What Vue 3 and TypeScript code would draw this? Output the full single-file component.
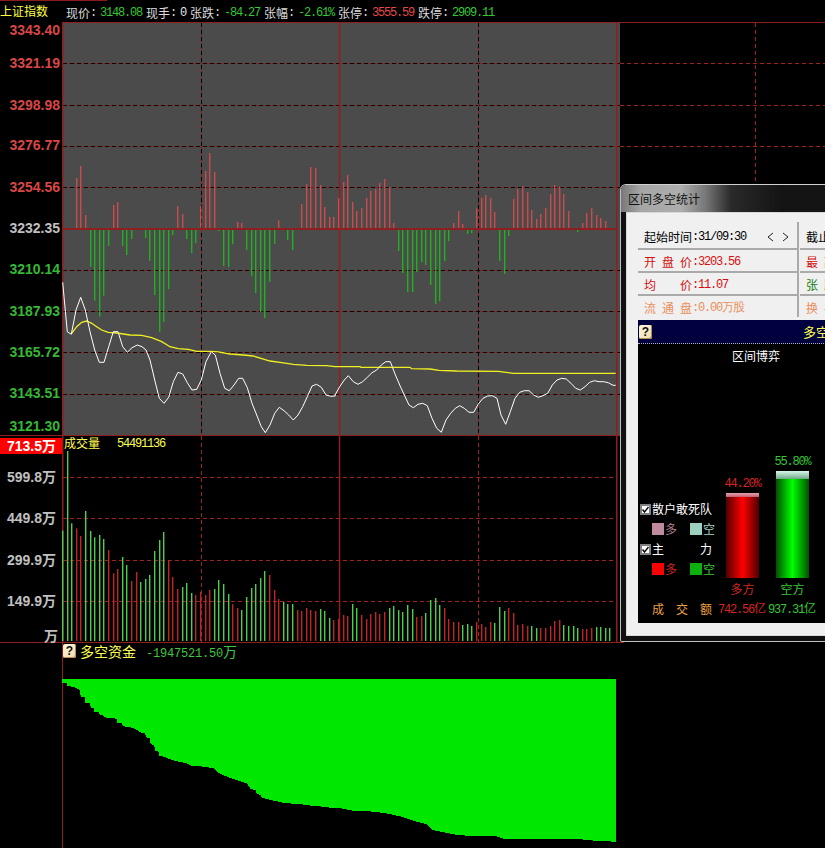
<script setup lang="ts">
type Pt = [number, number]

const barX = (i: number) => Math.round(62 + 4.6 * i)
const toPts = (raw: Pt[], x0: number, y0: number): Pt[] => raw.map(([x, y]) => [x0 + x / 3, y0 + y / 3])
const str = (p: Pt[]) => p.map(([x, y]) => `${x.toFixed(1)},${y.toFixed(1)}`).join(' ')

const macdRaw = [235,235,239,84,48,195,350,452,500,437,288,165,156,288,315,267,235,235,264,333,435,546,516,417,255,168,192,267,309,279,168,63,9,66,243,348,351,282,216,219,300,378,429,486,504,396,282,211,238,270,300,235,162,102,51,54,105,171,201,201,144,96,75,156,183,174,144,123,117,99,87,111,219,303,369,426,426,366,336,345,405,462,453,333,273,219,183,222,252,249,175,144,135,144,186,333,372,258,147,117,108,126,180,207,192,174,132,105,111,132,183,235,246,219,189,174,195,204,213,235]
const macd = macdRaw
  .map((z, i) => ({ x: barX(i), y: 150 + z / 3, up: z < 235 }))
  .filter((b) => Math.abs(b.y - 228.33) > 0.1)
  .map((b) => ({ x: b.x, y: b.up ? b.y : 229, h: Math.abs(b.y - 229), color: b.up ? '#c84c4c' : '#22b022' }))

const volRaw = '332g 93g 310g 325r 348r 273g 333g 352g 345g 357g 390r 460r 447r 411g 435g 483r 456r 486g 477g 465g 393g 360g 336g 420r 471r 507r 501g 489g 519g 525r 516r 525r 510r 507g 480g 492g 522g 552r 564r 570g 531g 504g 492g 474g 453g 465r 510r 537r 546g 552g 552g 570r 573r 564r 570r 573r 567g 573g 594g 600r 597r 585r 588r 552g 564g 585r 597r 582r 576r 582r 576r 564g 558g 570g 576g 555g 567g 591r 588r 579g 540g 534g 555g 564r 597r 606r 606r 615g 612g 618g 606r 612r 621r 606r 609g 561g 573g 564r 579r 615r 612r 618r 618g 624g 624r 624r 618r 603r 600r 615g 618g 618g 624g 627r 627r 624r 621g 621g 624g 624g'
const volumes = volRaw.split(' ').map((s, i) => {
  const y = 420 + parseInt(s) / 3
  return { x: barX(i), y, h: 641 - y, color: s.endsWith('g') ? '#4cd04c' : '#c02424' }
})

const whiteA: Pt[] = [[38,397],[42,440],[52,545],[64,553],[78,480],[92,442],[106,480],[120,545],[134,600],[148,637],[162,637],[176,590],[190,545],[204,545],[218,590],[232,607],[246,593],[262,585],[276,590],[288,600],[300,630],[314,690],[328,745],[342,760],[356,742],[370,695],[384,667],[398,672],[412,698],[426,720],[440,718],[454,690],[468,635],[484,605],[496,615],[510,670],[524,715],[538,722],[552,705],[566,685],[578,685],[592,713],[606,760],[620,795],[634,830],[646,848],[660,825],[674,790],[688,772],[702,782],[716,795],[730,810],[744,795],[758,770],[772,740],[786,708],[800,703],[814,712],[828,735],[842,739],[856,738]]
const whiteB: Pt[] = [[0,735],[14,710],[28,690],[40,677],[55,695],[69,703],[83,695],[97,682],[111,668],[125,660],[139,645],[152,635],[166,635],[180,672],[194,705],[208,735],[222,765],[235,773],[249,763],[263,760],[277,767],[291,805],[305,835],[319,847],[333,810],[347,790],[361,775],[374,767],[388,775],[402,787],[416,787],[430,762],[444,745],[458,738],[472,737],[486,745],[498,795],[512,823],[526,785],[540,745],[554,727],[568,722],[582,722],[596,735],[610,742],[624,737],[638,730],[652,705],[666,690],[680,685],[694,687],[708,700],[722,715],[736,720],[750,710],[764,697],[778,692],[792,695],[806,695],[820,698],[834,706],[842,706]]
const whiteLine = str([...toPts(whiteA, 50, 150), ...toPts(whiteB, 335, 150)])

const yellowA: Pt[] = [[65,550],[80,530],[95,517],[110,513],[125,520],[140,530],[155,540],[175,547],[200,549],[240,555],[275,556],[305,563],[335,575],[360,590],[385,596],[415,598],[440,604],[470,604],[500,605],[540,612],[580,615],[610,618],[660,633],[695,638],[730,643],[770,646],[830,647]]
const yellowB: Pt[] = [[0,650],[75,650],[78,652],[225,652],[230,656],[285,657],[312,661],[365,663],[490,664],[535,670],[842,670]]
const yellowLine = str([...toPts(yellowA, 50, 150), ...toPts(yellowB, 335, 150)])

const areaA: Pt[] = [[37,130],[50,130],[52,137],[78,143],[90,150],[92,170],[105,172],[105,188],[120,190],[122,203],[133,205],[133,215],[147,217],[149,224],[160,226],[162,232],[200,236],[202,248],[216,250],[218,258],[245,263],[258,268],[270,277],[285,280],[288,292],[300,295],[302,312],[313,315],[315,332],[328,335],[328,347],[342,350],[356,356],[385,365],[410,370],[425,377],[450,379],[490,384],[506,398],[520,405],[535,412],[560,420],[590,430],[602,447],[617,450],[620,462],[632,465],[635,472],[648,476],[672,482],[700,488],[730,491],[755,493],[785,497],[810,499],[840,503],[870,504]]
const areaB: Pt[] = [[0,384],[40,392],[80,393],[135,399],[180,409],[230,425],[260,433],[275,449],[340,463],[380,467],[465,468],[497,478],[520,477],[715,477],[775,483],[828,485]]
const area = str([[62, 679], [616, 679], ...toPts(areaB, 340, 680).reverse(), ...toPts(areaA, 50, 640).reverse()])

const priceLabels = [
  { t: '3343.40', y: 30, c: 'up' }, { t: '3321.19', y: 63, c: 'up' }, { t: '3298.98', y: 105, c: 'up' },
  { t: '3276.77', y: 145, c: 'up' }, { t: '3254.56', y: 187, c: 'up' }, { t: '3232.35', y: 228, c: 'flat' },
  { t: '3210.14', y: 269, c: 'down' }, { t: '3187.93', y: 311, c: 'down' }, { t: '3165.72', y: 352, c: 'down' },
  { t: '3143.51', y: 393, c: 'down' }, { t: '3121.30', y: 426, c: 'down' },
]
const priceGrid = [63, 105, 146, 187, 270, 311, 352, 394]
const volGrid = [477, 518, 560, 601]
const volLabels = [
  { t: '599.8万', y: 477 }, { t: '449.8万', y: 518 }, { t: '299.9万', y: 560 }, { t: '149.9万', y: 601 },
]

const quotes = [
  { l: '现价', v: '3148.08', c: 'down' }, { l: '现手', v: '0', c: 'plain' }, { l: '张跌', v: '-84.27', c: 'down' },
  { l: '张幅', v: '-2.61%', c: 'down' }, { l: '张停', v: '3555.59', c: 'up' }, { l: '跌停', v: '2909.11', c: 'down' },
]
const leftRows = [
  { l: '开 盘 价', v: ':3203.56', c: 'red' }, { l: '均 价', v: ':11.07', c: 'red' }, { l: '流 通 盘', v: ':0.00万股', c: 'orange' },
]
const rightRows = [
  { l: '截止时间', c: 'black' }, { l: '最 高 价', c: 'red' }, { l: '张 跌 幅', c: 'green' }, { l: '换 手 率', c: 'orange' },
]
</script>

<template>
  <div class="screen">
    <header class="quote-bar">
      <span class="index-name">上证指数</span>
      <div class="quotes">
        <span v-for="q in quotes" :key="q.l" class="quote">
          <span class="quote-label">{{ q.l }}<i class="num">:</i></span>
          <span class="num" :class="q.c">{{ q.v }}</span>
        </span>
      </div>
    </header>

    <svg class="pane" width="825" height="414" viewBox="0 22 825 414">
      <rect x="62" y="23" width="558" height="412" fill="#4b4b4b" />
      <g class="crisp">
        <line x1="62" y1="22.5" x2="825" y2="22.5" class="solid" />
        <line x1="0" y1="435.5" x2="620" y2="435.5" class="solid" />
        <template v-for="y in priceGrid" :key="y">
          <line x1="63" :y1="y + 0.5" x2="620" :y2="y + 0.5" class="solid" />
          <line x1="63" :y1="y + 0.5" x2="620" :y2="y + 0.5" class="dash-black" />
          <line x1="620" :y1="y + 0.5" x2="825" :y2="y + 0.5" class="dash-red" />
        </template>
        <template v-for="x in [201.5, 478.5]" :key="x">
          <line :x1="x" y1="23" :x2="x" y2="435" class="solid" />
          <line :x1="x" y1="23" :x2="x" y2="435" class="dash-black" />
        </template>
        <line x1="755.5" y1="23" x2="755.5" y2="181" class="dash-red" />
      </g>
      <rect x="62" y="22" width="1.5" height="414" fill="#8f1e1e" />
      <rect x="338.8" y="22" width="1.5" height="414" fill="#8f1e1e" />
      <rect x="616" y="22" width="1.5" height="414" fill="#8f1e1e" />
      <rect v-for="(b, i) in macd" :key="i" :x="b.x" :y="b.y" width="1.4" :height="b.h" :fill="b.color" />
      <rect x="62" y="228" width="555" height="2" fill="#8f1e1e" class="crisp" />
      <polyline :points="yellowLine" class="yellow-line" />
      <polyline :points="whiteLine" class="white-line" />
      <text v-for="p in priceLabels" :key="p.t" x="60" :y="p.y + 5" class="axis" :class="p.c">{{ p.t }}</text>
    </svg>

    <svg class="pane" width="825" height="207" viewBox="0 436 825 207">
      <g class="crisp">
        <template v-for="y in volGrid" :key="y">
          <line x1="63" :y1="y + 0.5" x2="617" :y2="y + 0.5" class="dash-red" />
        </template>
        <line x1="201.5" y1="436" x2="201.5" y2="642" class="dash-red" />
        <line x1="478.5" y1="436" x2="478.5" y2="642" class="dash-red" />
      </g>
      <rect x="62" y="436" width="1.5" height="206" fill="#8f1e1e" />
      <rect x="338.8" y="436" width="1.5" height="206" fill="#8f1e1e" />
      <rect x="616" y="436" width="1.5" height="206" fill="#8f1e1e" />
      <rect v-for="(b, i) in volumes" :key="i" :x="b.x" :y="b.y" width="1.4" :height="b.h" :fill="b.color" />
      <g class="crisp">
        <line x1="0" y1="642.5" x2="624" y2="642.5" class="solid" />
        <rect x="0" y="438" width="62" height="16" fill="#ff0000" />
      </g>
      <text x="7" y="451" class="axis vol-top">713.5万</text>
      <text v-for="v in volLabels" :key="v.t" x="7" :y="v.y + 5" class="axis flat">{{ v.t }}</text>
      <text x="44" y="641" class="axis flat">万</text>
      <text x="64" y="448" class="caption-cjk">成交量</text>
      <text x="117" y="447" class="caption-num">54491136</text>
    </svg>

    <section class="funds">
      <div class="funds-main">
        <div class="funds-caption">
          <span class="help">?</span>
          <span class="funds-title">多空资金</span>
          <span class="funds-value"><span class="num-wide">-1947521.50</span>万</span>
        </div>
        <svg width="762" height="169" viewBox="63 679 762 169" class="pane">
          <polygon :points="area" fill="#00e800" class="crisp" />
        </svg>
      </div>
    </section>

    <aside class="window">
      <div class="win-title">区间多空统计</div>
      <div class="client">
        <div class="table">
          <div class="col col-left">
            <div class="row row-first black">
              <span class="row-label">起始时间</span><span class="num">:31/09:30</span>
              <svg class="arrows" width="22" height="10" viewBox="0 0 22 10">
                <path d="M6 1 1 5 6 9M16 1 21 5 16 9" fill="none" stroke="#222" />
              </svg>
            </div>
            <div v-for="r in leftRows" :key="r.l" class="row" :class="r.c">
              <span class="row-label">{{ r.l }}</span><span class="num">{{ r.v }}</span>
            </div>
          </div>
          <div class="col col-right">
            <div v-for="(r, i) in rightRows" :key="r.l" class="row" :class="[r.c, { 'row-first': i === 0 }]">
              <span class="row-label">{{ r.l }}</span>
            </div>
          </div>
        </div>

        <div class="panel">
          <div class="panel-head">
            <span class="help">?</span>
            <span class="panel-title">多空资金</span>
          </div>
          <div class="panel-body">
            <div class="panel-sub">区间博弈</div>
            <div class="stats">
              <div class="legend">
                <div class="legend-row">
                  <span class="check"><svg width="7" height="7" viewBox="0 0 7 7"><path d="M.5 3.5 2.5 6 6.5 1" fill="none" stroke="#000" stroke-width="1.4" /></svg></span>
                  <span class="white">散户敢死队</span>
                </div>
                <div class="legend-row indent">
                  <i class="swatch s-pink"></i><span class="t-pink">多</span>
                  <i class="swatch s-teal second"></i><span class="t-teal">空</span>
                </div>
                <div class="legend-row">
                  <span class="check"><svg width="7" height="7" viewBox="0 0 7 7"><path d="M.5 3.5 2.5 6 6.5 1" fill="none" stroke="#000" stroke-width="1.4" /></svg></span>
                  <span class="white main-force">主 力</span>
                </div>
                <div class="legend-row indent">
                  <i class="swatch s-red"></i><span class="t-red">多</span>
                  <i class="swatch s-green second"></i><span class="t-green">空</span>
                </div>
              </div>
              <div class="bar-col t-red">
                <span class="num pct">44.20%</span>
                <div class="bar bar-red"></div>
                <span class="bar-name">多方</span>
              </div>
              <div class="bar-col t-green">
                <span class="num pct">55.80%</span>
                <div class="bar bar-green"></div>
                <span class="bar-name">空方</span>
              </div>
            </div>
            <div class="totals">
              <span class="total-label">成 交 额</span>
              <span class="t-red total"><span class="num">742.56</span>亿</span>
              <span class="t-green total"><span class="num">937.31</span>亿</span>
            </div>
          </div>
        </div>
      </div>
    </aside>
  </div>
</template>

<style>
html, body { margin: 0; background: #000; }
</style>

<style scoped>
.screen {
  position: relative;
  width: 825px;
  height: 848px;
  overflow: hidden;
  background: #000;
  font-family: "Noto Sans CJK SC", "Liberation Sans", sans-serif;
  font-size: 12px;
  line-height: 14px;
}
.pane { display: block; overflow: visible; }
.num {
  font-family: "Liberation Mono", monospace;
  font-size: 12px;
  letter-spacing: -1.2px;
  font-style: normal;
}

/* header */
.quote-bar {
  height: 22px;
  display: flex;
  align-items: center;
  background: linear-gradient(#8c1c1c, #8c1c1c) no-repeat 0 0 / 107px 1px;
  padding-top: 2px;
  box-sizing: border-box;
}
.index-name { width: 66px; color: #ffff3c; margin-top: -3px; }
.quotes { display: flex; gap: 4px; margin-top: 2px; }
.quote { display: flex; align-items: center; color: #dcdcdc; }
.quote-label { display: flex; width: 34px; }
.down { color: #35c835; }
.up { color: #e44a4a; }
.plain { color: #e8e8e8; }

/* chart primitives */
.crisp { shape-rendering: crispEdges; }
.solid { stroke: #8f1e1e; stroke-width: 1; }
.dash-black { stroke: #000; stroke-width: 1; stroke-dasharray: 4 3; }
.dash-red { stroke: #a02222; stroke-width: 1; stroke-dasharray: 4 3; }
.white-line { fill: none; stroke: #fff; stroke-width: 1; }
.yellow-line { fill: none; stroke: #f0f020; stroke-width: 1.3; }
.axis {
  font-family: "Liberation Sans", "Noto Sans CJK SC", sans-serif;
  font-size: 14px;
  font-weight: 700;
}
text.axis { text-anchor: start; }
.axis[x="60"] { text-anchor: end; }
.axis.up { fill: #d84646; }
.axis.down { fill: #35b835; }
.axis.flat { fill: #c0c0c0; }
.axis.vol-top { fill: #fff; }
.caption-cjk { font-size: 12px; fill: #ffff50; }
.caption-num {
  font-family: "Liberation Mono", monospace;
  font-size: 12px;
  letter-spacing: -1.2px;
  fill: #ffff50;
}

/* funds pane */
.funds { padding-left: 62px; }
.funds-main { border-left: 1px solid #8f1e1e; height: 205px; }
.funds-caption {
  height: 36px;
  display: flex;
  align-items: flex-start;
  padding-top: 1px;
  box-sizing: border-box;
  color: #ffff50;
}
.funds-title { font-size: 14px; line-height: 14px; margin-left: 4px; }
.funds-value { margin-left: 10px; color: #3fc83f; font-size: 14px; line-height: 14px; }
.num-wide {
  font-family: "Liberation Mono", monospace;
  font-size: 12px;
  letter-spacing: -0.2px;
}
.help {
  display: inline-block;
  width: 13px;
  height: 14px;
  flex: none;
  border-radius: 2px;
  background: linear-gradient(135deg, #fff6dc, #efdcae);
  box-shadow: inset -1px -1px 0 #b88a50;
  color: #111;
  font-family: "Liberation Sans", sans-serif;
  font-weight: 700;
  font-size: 12px;
  line-height: 14px;
  text-align: center;
}

/* window */
.window {
  position: absolute;
  left: 620px;
  top: 184px;
  width: 380px;
  height: 458px;
  box-sizing: border-box;
  padding: 0 5px 5px;
  background: #111;
  border: 1px solid #bdbdbd;
  border-top-color: #d0d0d0;
  border-radius: 6px 6px 2px 2px;
  display: flex;
  flex-direction: column;
}
.win-title {
  height: 27px;
  margin: 0 -5px;
  padding-left: 7px;
  flex: none;
  border-radius: 5px 5px 0 0;
  background: linear-gradient(90deg, #787878 0, #a6a6a6 20px, #adadad 60px, #767676 85px, #2a2a2a 110px, #141414 160px);
  color: #111;
  line-height: 27px;
}
.client {
  flex: 1;
  box-sizing: border-box;
  border: 1px solid #d8d8d8;
  background: #f0f0f0;
  padding: 9px 0 12px 11px;
  display: flex;
  flex-direction: column;
}
.table { display: flex; height: 95px; flex: none; }
.col-left { width: 159px; }
.col-right { flex: 1; border-left: 2px solid #aaa; padding-left: 1px; }
.row {
  height: 23px;
  box-sizing: border-box;
  display: flex;
  align-items: center;
  padding: 2px 0 0 6px;
  border-bottom: 2px solid #aaa;
}
.row-first { height: 28px; padding-top: 4px; }
.row:last-child { border-bottom: 0; height: 21px; }
.col-right .row { padding-left: 6px; }
.row-label {
  display: inline-block;
  width: 48px;
  flex: none;
  text-align: justify;
  text-align-last: justify;
}
.black { color: #000; }
.red { color: #d41010; }
.green { color: #0f7d0f; }
.orange { color: #ea8f5c; }
.arrows { margin-left: 21px; }

.panel {
  margin-top: 3px;
  height: 303px;
  flex: none;
  width: 236px;
  display: flex;
  flex-direction: column;
  background: #000;
}
.panel-head {
  height: 23px;
  flex: none;
  display: flex;
  align-items: center;
  padding-left: 1px;
  background: #00003e;
  border-bottom: 1px dotted #b0b0b0;
}
.panel-title { margin-left: 151px; font-size: 13px; color: #ffff50; white-space: nowrap; }
.panel-body { flex: 1; display: flex; flex-direction: column; padding-bottom: 7px; box-sizing: border-box; }
.panel-sub { margin-top: 5px; color: #fff; text-align: center; }
.stats { margin-top: auto; display: flex; align-items: flex-end; padding-left: 2px; }
.legend { width: 86px; margin-bottom: 18px; }
.legend-row { height: 20px; display: flex; align-items: center; }
.indent { padding-left: 12px; }
.check {
  width: 7px;
  height: 7px;
  flex: none;
  margin-right: 1px;
  background: #fff;
  border: 2px solid #808080;
  display: flex;
}
.white { color: #fff; white-space: nowrap; }
.main-force { width: 60px; text-align-last: justify; }
.swatch { width: 12px; height: 12px; margin-right: 1px; flex: none; }
.second { margin-left: 13px; }
.s-pink { background: #c28b9d; }
.s-teal { background: #9ed0c0; }
.s-red { background: #ff0000; }
.s-green { background: #0eb00e; }
.t-pink { color: #b5808c; }
.t-teal { color: #a2d4c4; }
.t-red { color: #d62424; }
.t-green { color: #35c835; }
.bar-col { width: 33px; display: flex; flex-direction: column; align-items: center; }
.bar-col + .bar-col { margin-left: 17px; }
.pct { white-space: nowrap; margin-bottom: 2px; }
.bar { width: 33px; }
.bar-red {
  height: 85px;
  background:
    linear-gradient(#e8a0b0, #c06070) top / 100% 4px no-repeat,
    linear-gradient(90deg, #500000, #ff0000 50%, #500000);
}
.bar-green {
  height: 107px;
  background:
    linear-gradient(#d8f8e8, #70a888) top / 100% 8px no-repeat,
    linear-gradient(90deg, #005000, #00ff00 50%, #005000);
}
.bar-name { margin-top: 4px; margin-bottom: 1px; white-space: nowrap; }
.totals { display: flex; align-items: center; margin-top: 5px; height: 14px; padding-left: 14px; }
.total-label { width: 60px; margin-right: 6px; color: #eda040; text-align-last: justify; }
.total { width: 50px; white-space: nowrap; }
</style>
